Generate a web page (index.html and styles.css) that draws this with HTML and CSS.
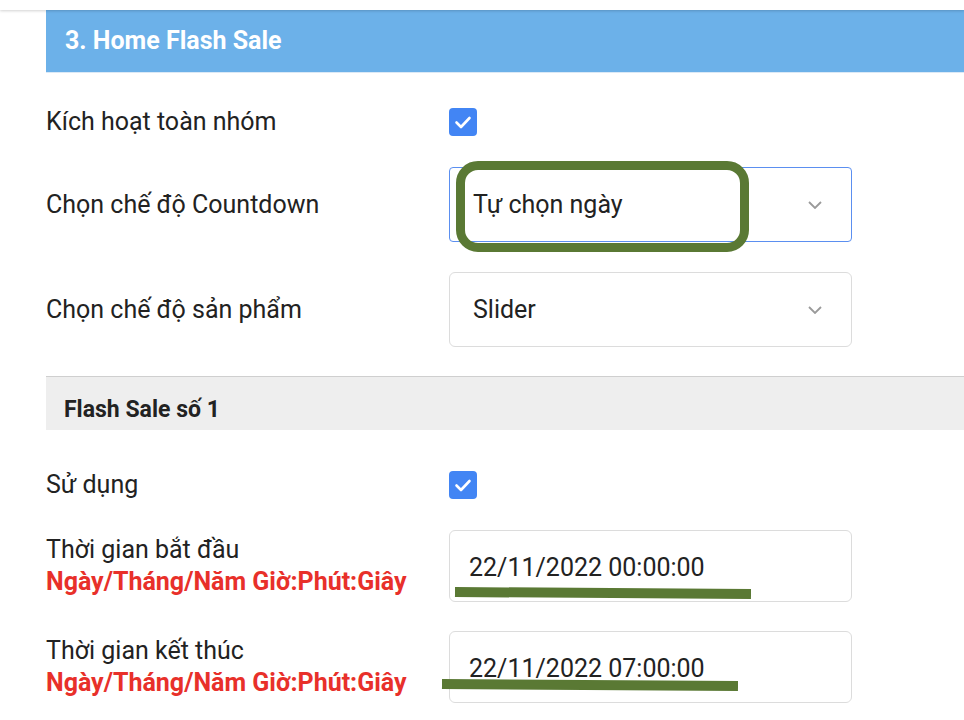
FILE: index.html
```html
<!DOCTYPE html>
<html lang="vi">
<head>
<meta charset="utf-8">
<title>Home Flash Sale</title>
<link rel="stylesheet" href="styles.css">
</head>
<body>
<div class="topbar"></div>
<main class="panel">
  <h2 class="panel-title">3. Home Flash Sale</h2>
  <div class="form">
    <div class="row row-check first">
      <label class="label">Kích hoạt toàn nhóm</label>
      <span class="checkbox"><svg viewBox="0 0 28 28" width="28" height="28"><path d="M7.5 14.5l4.5 4.5 8.5-9" fill="none" stroke="#fff" stroke-width="2.6" stroke-linecap="round" stroke-linejoin="round"/></svg></span>
    </div>
    <div class="row">
      <label class="label">Chọn chế độ Countdown</label>
      <div class="control select focused">
        <span class="value">Tự chọn ngày</span>
        <svg class="chev" viewBox="0 0 14 8" width="14" height="8"><path d="M1 1l6 6 6-6" fill="none" stroke="#9a9a9a" stroke-width="1.8"/></svg>
        <span class="mark-box"></span>
      </div>
    </div>
    <div class="row">
      <label class="label">Chọn chế độ sản phẩm</label>
      <div class="control select">
        <span class="value">Slider</span>
        <svg class="chev" viewBox="0 0 14 8" width="14" height="8"><path d="M1 1l6 6 6-6" fill="none" stroke="#9a9a9a" stroke-width="1.8"/></svg>
      </div>
    </div>
    <div class="section">Flash Sale số 1</div>
    <div class="row row-check use">
      <label class="label">Sử dụng</label>
      <span class="checkbox"><svg viewBox="0 0 28 28" width="28" height="28"><path d="M7.5 14.5l4.5 4.5 8.5-9" fill="none" stroke="#fff" stroke-width="2.6" stroke-linecap="round" stroke-linejoin="round"/></svg></span>
    </div>
    <div class="row row-time start">
      <label class="label">Thời gian bắt đầu<span class="hint">Ngày/Tháng/Năm Giờ:Phút:Giây</span></label>
      <div class="control input">
        <span class="value">22/11/2022 00:00:00</span>
        <span class="mark-line one"></span>
      </div>
    </div>
    <div class="row row-time">
      <label class="label">Thời gian kết thúc<span class="hint">Ngày/Tháng/Năm Giờ:Phút:Giây</span></label>
      <div class="control input">
        <span class="value">22/11/2022 07:00:00</span>
        <span class="mark-line two"></span>
      </div>
    </div>
  </div>
</main>
</body>
</html>
```
FILE: styles.css
```css
* { box-sizing: border-box; }
html, body { margin: 0; padding: 0; background: #fff; }
body {
  font-family: Roboto, "Noto Sans", "Liberation Sans", sans-serif;
  color: #222;
  width: 964px;
  overflow: hidden;
}
.topbar {
  height: 10px;
  background: #fff;
  box-shadow: 0 1px 3px rgba(0,0,0,0.18);
  position: relative;
  z-index: 1;
}
.panel {
  margin-left: 46px;
}
.panel-title {
  margin: 0;
  height: 63px;
  background: #6cb1e9;
  color: #fff;
  font-size: 25px;
  font-weight: 700;
  line-height: 61px;
  padding-left: 19px;
  border-bottom: 1px solid #dbe9f6;
}
.form {
  display: flex;
  flex-direction: column;
  gap: 30px;
}
.row {
  display: flex;
  align-items: center;
}
.row-check { height: 28px; }
.row-check .label { line-height: 28px; }
.row-check.first { margin-top: 35px; margin-bottom: 1px; }
.row-check.use { margin-top: 11px; }
.row-time.start { margin-top: 1px; margin-bottom: -1px; }
.label {
  width: 403px;
  flex: none;
  font-size: 25px;
  line-height: 32px;
  color: #222;
}
.checkbox {
  width: 28px;
  height: 28px;
  border-radius: 4px;
  background: #4285f4;
  display: block;
}
.checkbox svg { display: block; }
.control {
  position: relative;
  width: 403px;
  background: #fff;
  border: 1px solid #dcdcdc;
  border-radius: 6px;
  display: flex;
  align-items: center;
  font-size: 25px;
  color: #222;
}
.select {
  height: 75px;
  padding-left: 23px;
  padding-right: 29px;
  justify-content: space-between;
}
.select.focused {
  border-color: #5b8ff0;
  border-radius: 4px;
}
.chev { display: block; }
.input {
  height: 72px;
  padding-left: 19px;
  padding-top: 2px;
}
.hint {
  display: block;
  color: #e8302a;
  font-weight: 700;
  font-size: 25px;
  line-height: 32px;
}
.section {
  margin-top: -1px;
  height: 54px;
  background: #eeeeee;
  border-top: 1px solid #cfcfcf;
  font-size: 23px;
  font-weight: 700;
  color: #222;
  padding-left: 18px;
  line-height: 66px;
}
.mark-box {
  position: absolute;
  left: 6px;
  top: -7px;
  width: 293px;
  height: 91px;
  border: 9px solid #5a7934;
  border-radius: 22px;
  pointer-events: none;
}
.mark-line {
  position: absolute;
  height: 10px;
  width: 296px;
  background: #5a7934;
  transform-origin: left center;
  transform: rotate(0.4deg);
}
.mark-line.one { left: 5px; top: 56px; }
.mark-line.two { left: -8px; top: 47px; }
```
